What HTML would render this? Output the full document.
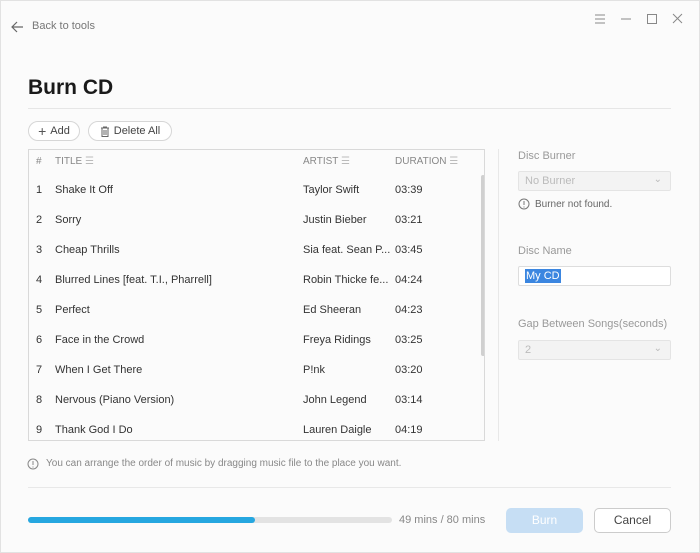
<!DOCTYPE html>
<html><head><meta charset="utf-8"><style>
*{margin:0;padding:0;box-sizing:border-box}
body{width:700px;height:553px;background:#fbfbfb;font-family:"Liberation Sans",sans-serif;position:relative;overflow:hidden;color:#333}
.a{position:absolute}
.t{font-size:11px;color:#333;white-space:nowrap}
.g{color:#999}
.btn{position:absolute;border:1px solid #d6d6d6;border-radius:11px;background:#fff;font-size:11px;color:#444;display:flex;align-items:center;justify-content:center;gap:4px}
.row{position:absolute;left:0;width:455px;height:30px;font-size:11px;color:#333}
.row span{position:absolute;top:0;line-height:30px;white-space:nowrap}
</style></head><body>
<div class="a" style="left:0;top:0;width:700px;height:553px;border:1px solid #e2e2e2"></div>
<svg class="a" style="left:10px;top:20px" width="14" height="14" viewBox="0 0 14 14"><path d="M7 2L2 7l5 5M2 7h11" fill="none" stroke="#666" stroke-width="1.2"/></svg>
<div class="a t" style="left:32px;top:20px;color:#777">Back to tools</div>
<svg class="a" style="left:594px;top:13px" width="90" height="12" viewBox="0 0 90 12"><path d="M1 2h10M1 6h10M1 10h10" stroke="#888" stroke-width="1"/><path d="M27 6h10" stroke="#888"/><rect x="53.5" y="1.5" width="9" height="9" fill="none" stroke="#888"/><path d="M79 1l9 9M88 1l-9 9" stroke="#888"/></svg>
<div class="a" style="left:28px;top:76px;font-size:21px;font-weight:bold;color:#1a1a1a">Burn CD</div>
<div class="a" style="left:28px;top:108px;width:643px;height:1px;background:#e6e6e6"></div>
<div class="btn" style="left:28px;top:121px;width:52px;height:20px"><span style="font-size:14px;color:#555">+</span>Add</div>
<div class="btn" style="left:88px;top:121px;width:84px;height:20px"><svg width="10" height="11" viewBox="0 0 10 11"><path d="M1 2h8M3.5 2V1h3v1M2 2.5v8h6v-8M4 4v5M6 4v5" fill="none" stroke="#666"/></svg>Delete All</div>
<div class="a" style="left:28px;top:149px;width:457px;height:292px;border:1px solid #d9d9d9;background:#fbfbfb;overflow:hidden">
<div class="row" style="top:-3px;font-size:10px;color:#888"><span style="left:7px">#</span><span style="left:26px">TITLE <span style="position:static;color:#bbb">☰</span></span><span style="left:274px">ARTIST <span style="position:static;color:#bbb">☰</span></span><span style="left:366px">DURATION <span style="position:static;color:#bbb">☰</span></span></div>
<div class="row" style="top:25px"><span style="left:7px">1</span><span style="left:26px">Shake It Off</span><span style="left:274px">Taylor Swift</span><span style="left:366px">03:39</span></div>
<div class="row" style="top:55px"><span style="left:7px">2</span><span style="left:26px">Sorry</span><span style="left:274px">Justin Bieber</span><span style="left:366px">03:21</span></div>
<div class="row" style="top:85px"><span style="left:7px">3</span><span style="left:26px">Cheap Thrills</span><span style="left:274px">Sia feat. Sean P...</span><span style="left:366px">03:45</span></div>
<div class="row" style="top:115px"><span style="left:7px">4</span><span style="left:26px">Blurred Lines [feat. T.I., Pharrell]</span><span style="left:274px">Robin Thicke fe...</span><span style="left:366px">04:24</span></div>
<div class="row" style="top:145px"><span style="left:7px">5</span><span style="left:26px">Perfect</span><span style="left:274px">Ed Sheeran</span><span style="left:366px">04:23</span></div>
<div class="row" style="top:175px"><span style="left:7px">6</span><span style="left:26px">Face in the Crowd</span><span style="left:274px">Freya Ridings</span><span style="left:366px">03:25</span></div>
<div class="row" style="top:205px"><span style="left:7px">7</span><span style="left:26px">When I Get There</span><span style="left:274px">P!nk</span><span style="left:366px">03:20</span></div>
<div class="row" style="top:235px"><span style="left:7px">8</span><span style="left:26px">Nervous (Piano Version)</span><span style="left:274px">John Legend</span><span style="left:366px">03:14</span></div>
<div class="row" style="top:265px"><span style="left:7px">9</span><span style="left:26px">Thank God I Do</span><span style="left:274px">Lauren Daigle</span><span style="left:366px">04:19</span></div>
<div class="a" style="left:452px;top:25px;width:4px;height:181px;background:#d0d0d0;border-radius:2px"></div>
</div>
<div class="a" style="left:498px;top:149px;width:1px;height:292px;background:#e8e8e8"></div>
<div class="a t g" style="left:518px;top:150px">Disc Burner</div>
<div class="a" style="left:518px;top:171px;width:153px;height:20px;border:1px solid #e4e4e4;background:#f3f3f3;border-radius:2px"><span class="a t" style="left:6px;top:3px;color:#bbb">No Burner</span><span class="a" style="right:8px;top:2px;color:#bbb;font-size:10px">⌄</span></div>
<svg class="a" style="left:518px;top:198px" width="12" height="12"><circle cx="6" cy="6" r="5" fill="none" stroke="#777"/><path d="M6 3v4M6 8.5v1" stroke="#777"/></svg>
<div class="a t" style="left:535px;top:199px;font-size:10px;color:#666">Burner not found.</div>
<div class="a t g" style="left:518px;top:245px">Disc Name</div>
<div class="a" style="left:518px;top:266px;width:153px;height:20px;border:1px solid #ddd;background:#fff;border-radius:2px"><span class="a t" style="left:6px;top:2px;background:#3b86e0;color:#fff;padding:1px 1px">My CD</span></div>
<div class="a t g" style="left:518px;top:318px">Gap Between Songs(seconds)</div>
<div class="a" style="left:518px;top:340px;width:153px;height:20px;border:1px solid #e4e4e4;background:#f3f3f3;border-radius:2px"><span class="a t" style="left:6px;top:3px;color:#bbb">2</span><span class="a" style="right:8px;top:2px;color:#bbb;font-size:10px">⌄</span></div>
<svg class="a" style="left:27px;top:458px" width="12" height="12"><circle cx="6" cy="6" r="5" fill="none" stroke="#888"/><path d="M6 3v4M6 8.5v1" stroke="#888"/></svg>
<div class="a t" style="left:46px;top:458px;font-size:10px;color:#888">You can arrange the order of music by dragging music file to the place you want.</div>
<div class="a" style="left:28px;top:487px;width:643px;height:1px;background:#e8e8e8"></div>
<div class="a" style="left:28px;top:517px;width:364px;height:6px;background:#e3e3e3;border-radius:3px"></div>
<div class="a" style="left:28px;top:517px;width:227px;height:6px;background:#26a7e0;border-radius:3px"></div>
<div class="a t" style="left:399px;top:514px;color:#888">49 mins / 80 mins</div>
<div class="a" style="left:506px;top:508px;width:77px;height:25px;background:#c6def4;border-radius:5px;color:#fff;font-size:12px;text-align:center;line-height:25px">Burn</div>
<div class="a" style="left:594px;top:508px;width:77px;height:25px;background:#fff;border:1px solid #ccc;border-radius:5px;color:#444;font-size:12px;text-align:center;line-height:23px">Cancel</div>
</body></html>
